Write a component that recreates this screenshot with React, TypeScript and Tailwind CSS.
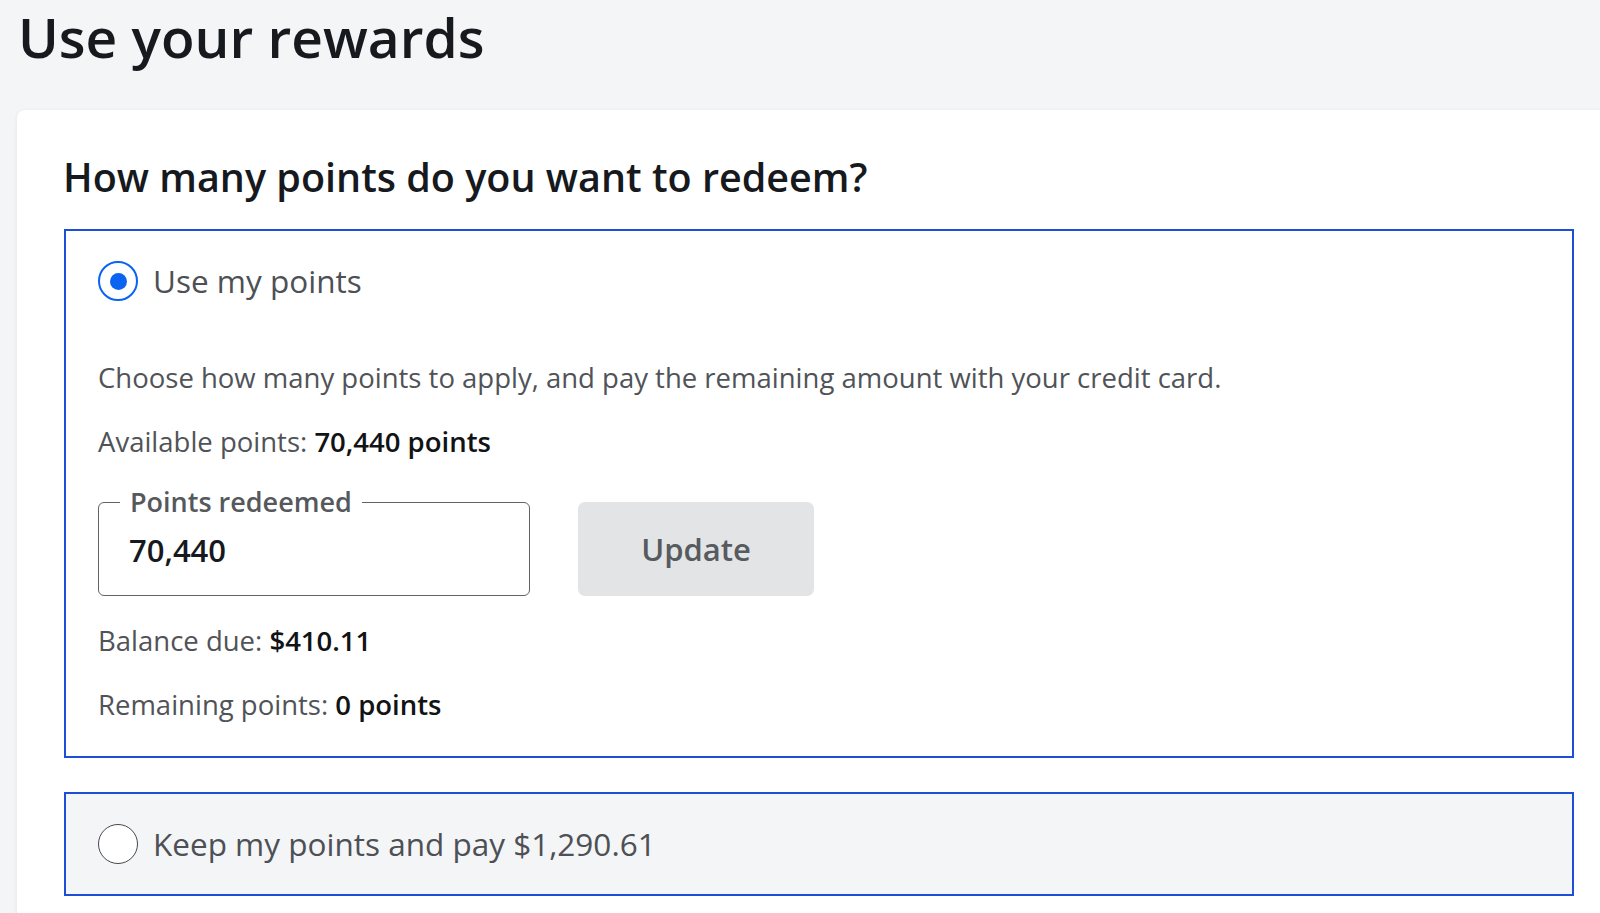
import { useState } from "react";

const font = "font-['Open_Sans',sans-serif]";

function Radio({ checked }: { checked: boolean }) {
  return checked ? (
    <span className="flex size-[40px] shrink-0 items-center justify-center rounded-full border-2 border-[#0b63f2] bg-white">
      <span className="size-[17px] rounded-full bg-[#0b63f2]" />
    </span>
  ) : (
    <span className="size-[40px] shrink-0 rounded-full border-[1.5px] border-[#45484c] bg-white" />
  );
}

export default function App() {
  const [choice, setChoice] = useState<"points" | "cash">("points");
  const [points, setPoints] = useState("70,440");

  return (
    <div className={`${font} h-[913px] w-[1600px] overflow-hidden bg-[#f4f5f7] text-[#16191d]`}>
      <h1 className="pl-[18px] pt-[5px] text-[55px] font-semibold leading-[64px]">
        Use your rewards
      </h1>

      <div className="ml-[17px] mt-[41px] w-[1604px] rounded-[8px] bg-white pb-[40px] pl-[47px] pr-[47px] pt-[40px] shadow-[0_1px_4px_rgba(0,0,0,0.08)]">
        <h2 className="-ml-[1px] text-[39.5px] font-semibold leading-[54px]">
          How many points do you want to redeem?
        </h2>

        <div className="mt-[25px] border-2 border-[#1c4ed8] bg-white pb-[33px] pl-[32px] pt-[30px]">
          <label className="flex h-[40px] cursor-pointer items-center gap-[15px]" onClick={() => setChoice("points")}>
            <Radio checked={choice === "points"} />
            <span className="text-[31.5px] leading-[40px] text-[#4d5055]">Use my points</span>
          </label>

          <p className="mt-[59px] text-[27.5px] leading-[36px] text-[#505357]">
            Choose how many points to apply, and pay the remaining amount with your credit card.
          </p>
          <p className="mt-[28px] text-[27.5px] leading-[36px] text-[#505357]">
            Available points: <span className="font-semibold text-[#111315]">70,440 points</span>
          </p>

          <div className="mt-[42px] flex items-start gap-[48px]">
            <div className="relative h-[94px] w-[432px] rounded-[6px] border-[1.5px] border-[#606367]">
              <span className="absolute -top-[19px] left-[21px] bg-white px-[10px] text-[27px] font-semibold leading-[36px] text-[#55585c]">
                Points redeemed
              </span>
              <input
                value={points}
                onChange={(e) => setPoints(e.target.value)}
                className="mt-[27px] h-[40px] w-full bg-transparent pl-[30px] text-[31px] font-semibold leading-[40px] text-[#16191d] outline-none"
              />
            </div>
            <button className="flex h-[94px] w-[236px] items-center justify-center rounded-[7px] bg-[#e3e4e6] text-[31px] font-semibold leading-[40px] text-[#575a5f]">
              Update
            </button>
          </div>

          <p className="mt-[27px] text-[27.5px] leading-[36px] text-[#505357]">
            Balance due: <span className="font-semibold text-[#111315]">$410.11</span>
          </p>
          <p className="mt-[28px] text-[27.5px] leading-[36px] text-[#505357]">
            Remaining points: <span className="font-semibold text-[#111315]">0 points</span>
          </p>
        </div>

        <div className="mt-[34px] border-2 border-[#1c4ed8] bg-[#f4f5f7] py-[30px] pl-[32px]">
          <label className="flex h-[40px] cursor-pointer items-center gap-[15px]" onClick={() => setChoice("cash")}>
            <Radio checked={choice === "cash"} />
            <span className="text-[31.5px] leading-[40px] text-[#4d5055]">Keep my points and pay $1,290.61</span>
          </label>
        </div>
      </div>
    </div>
  );
}
